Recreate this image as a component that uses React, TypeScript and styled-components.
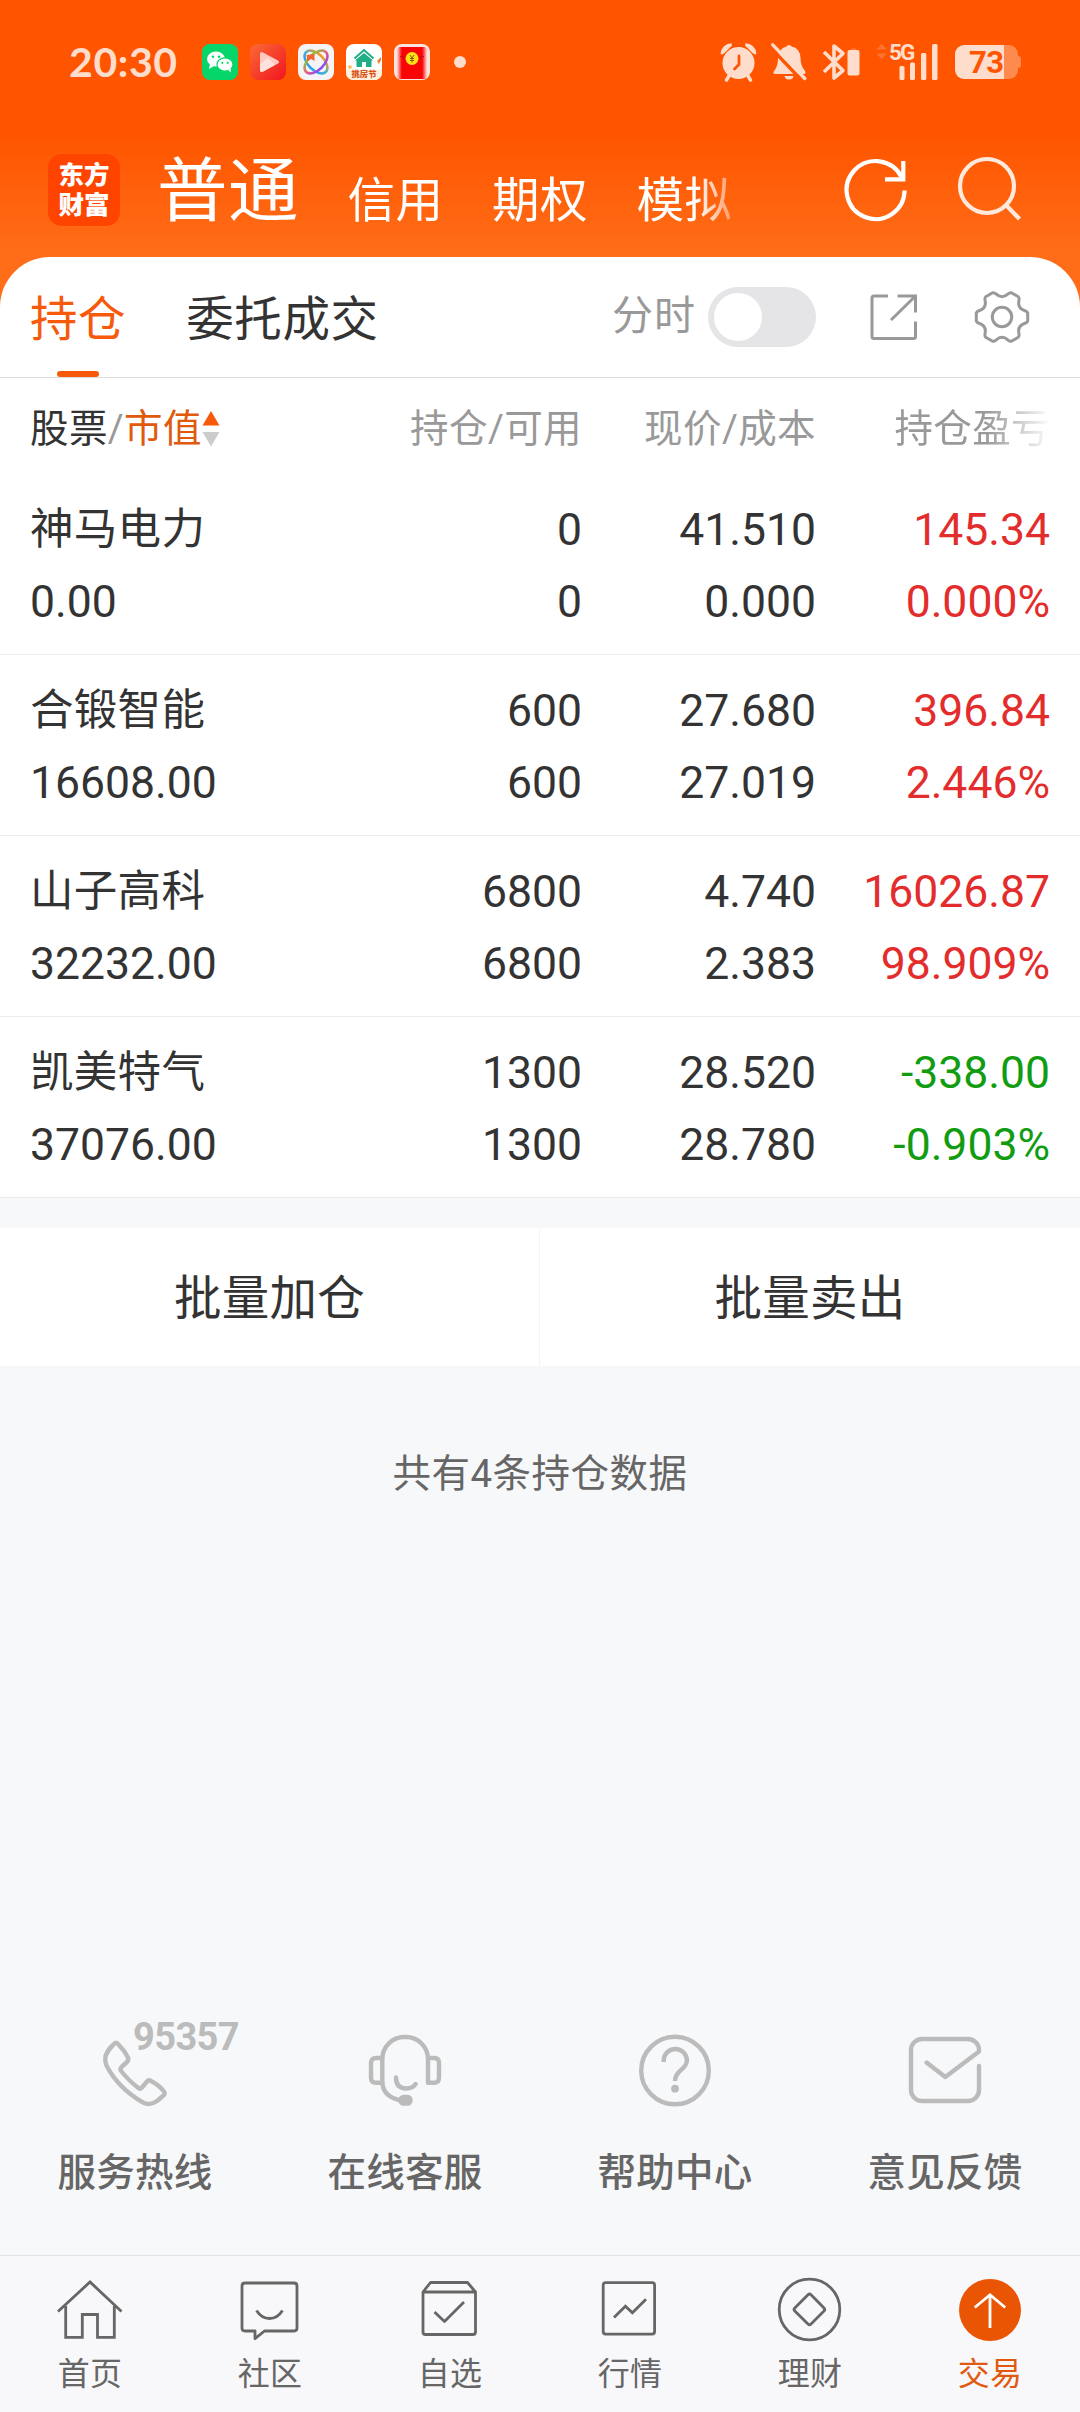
import React from "react";
import styled, { createGlobalStyle, css } from "styled-components";

const FONT = `Roboto, "Noto Sans CJK SC", sans-serif`;

const Global = createGlobalStyle`
  *, *::before, *::after { box-sizing: border-box; }
  body { margin: 0; background: #f7f8fa; font-family: ${FONT}; color: #333; }
  svg { display: block; flex: none; }
`;

const Page = styled.div`
  width: 1080px;
  height: 2412px;
  display: flex;
  flex-direction: column;
  background: #f7f8fa;
  overflow: hidden;
`;

/* ---------- orange header ---------- */

const Hero = styled.header`
  height: 307px;
  margin-bottom: -50px;
  flex: none;
  background: linear-gradient(#ff5500 0, #ff5500 135px, #ff6d18 255px, #ff6d18 100%);
`;

const StatusBar = styled.div`
  height: 124px;
  padding: 0 59px 0 69px;
  display: flex;
  align-items: center;
  justify-content: space-between;
  color: #ffddcc;
`;

const StatusLeft = styled.div`
  display: flex;
  align-items: center;
`;

const Clock = styled.span`
  width: 133px;
  font: 700 41px/50px Lato, sans-serif;
  letter-spacing: 0.6px;
`;

const AppIcons = styled.div`
  display: flex;
  gap: 12px;
`;

const MoreDot = styled.i`
  width: 12px;
  height: 12px;
  margin-left: 24px;
  border-radius: 50%;
  background: #ffddcc;
`;

const StatusRight = styled.div`
  display: flex;
  align-items: center;
`;

const StatusGlyphs = styled.div`
  display: flex;
  align-items: center;
  gap: 13px;
`;

const SignalWrap = styled.div`
  position: relative;
  margin: 0 17px 0 14px;
`;

const SignalLabel = styled.span`
  position: absolute;
  left: 13px;
  top: -3px;
  font: 700 22.5px/24px Roboto, sans-serif;
  letter-spacing: -1.8px;
`;

const Battery = styled.div`
  display: flex;
  align-items: center;
`;

const BatteryBody = styled.div`
  width: 63px;
  height: 34px;
  padding-left: 14px;
  border-radius: 9px;
  background: linear-gradient(90deg, #ffddcc 49px, #ff8a4d 49px);
  font: 700 31px/36px Roboto, sans-serif;
  letter-spacing: -0.5px;
  color: #ff5500;
`;

const BatteryNub = styled.i`
  width: 3px;
  height: 12px;
  border-radius: 0 3px 3px 0;
  background: #ff8a4d;
`;

const NavBar = styled.div`
  height: 133px;
  padding: 0 57px 0 48px;
  display: flex;
  align-items: center;
`;

const Logo = styled.div`
  width: 72px;
  height: 72px;
  margin-right: 37px;
  margin-top: -2px;
  border-radius: 14px;
  background: #ff4400;
  display: grid;
  place-content: center;
  font: 900 25.5px/30px ${FONT};
  color: #fff;
`;

const Accounts = styled.nav`
  width: 573px;
  margin-top: 11px;
  display: flex;
  align-items: baseline;
  gap: 48.5px;
  color: #fff;
  mask-image: linear-gradient(90deg, #000 540px, transparent 594px);
`;

const Account = styled.span<{ $active?: boolean }>`
  white-space: nowrap;
  font-size: ${(p) => (p.$active ? 70.5 : 47.5)}px;
  line-height: 100px;
  letter-spacing: 0.5px;
  ${(p) => !p.$active && css`position: relative; top: 1px;`}
`;

const NavActions = styled.div`
  margin-left: auto;
  margin-top: -2px;
  display: flex;
  gap: 39px;
`;

/* ---------- positions sheet ---------- */

const Sheet = styled.section`
  flex: none;
  background: #fff;
  border-radius: 50px 50px 0 0;
`;

const TabRow = styled.div`
  height: 121px;
  padding: 0 50px 0 30px;
  display: flex;
  align-items: center;
  border-bottom: 1px solid #dcdddf;
`;

const Tab = styled.div<{ $active?: boolean }>`
  height: 120px;
  margin-right: 60px;
  display: flex;
  flex-direction: column;
  align-items: center;
  font-size: 47.5px;
  line-height: 127px;
  letter-spacing: 0.6px;
  color: ${(p) => (p.$active ? "#f75a0b" : "#333")};
  ${(p) =>
    p.$active &&
    css`
      &::after {
        content: "";
        width: 42px;
        height: 6px;
        margin-top: -13px;
        border-radius: 3px;
        background: #f75a0b;
      }
    `}
`;

const TabTools = styled.div`
  margin-left: auto;
  margin-top: -1px;
  display: flex;
  align-items: center;
`;

const ToolIcons = styled.div`
  display: flex;
  align-items: center;
  gap: 57px;
`;

const ToggleLabel = styled.span`
  margin-right: 12px;
  font-size: 41px;
  line-height: 50px;
  margin-top: -1px;
  letter-spacing: 1px;
  color: #999;
`;

const Toggle = styled.div`
  width: 108px;
  height: 60px;
  margin-right: 53px;
  padding: 6px;
  border-radius: 30px;
  background: #e5e5e7;
  &::before {
    content: "";
    display: block;
    width: 48px;
    height: 48px;
    border-radius: 50%;
    background: #fff;
  }
`;

const columns = css`
  display: grid;
  grid-template-columns: 1fr 252px 234px 234px;
  padding: 0 30px;
  text-align: right;
`;

const TableHead = styled.div`
  ${columns}
  height: 96px;
  line-height: 102px;
  font-size: 38.5px;
  letter-spacing: 0.4px;
  color: #999;
`;

const HeadCell = styled.span`
  white-space: nowrap;
`;

const FadedCell = styled(HeadCell)`
  mask-image: linear-gradient(90deg, #000 170px, transparent 236px);
`;

const SortCell = styled(HeadCell)`
  display: flex;
  align-items: center;
  text-align: left;
  b { font-weight: 400; color: #333; }
  em { font-style: normal; color: #e0590c; }
`;

const Row = styled.div`
  ${columns}
  height: 181px;
  padding-top: 20px;
  line-height: 72px;
  font-size: 44.5px;
  border-bottom: 1px solid #ececee;
`;

const Cell = styled.div<{ $tone?: string }>`
  display: flex;
  flex-direction: column;
  color: ${(p) => p.$tone ?? "#333"};
`;

const NameCell = styled(Cell)`
  text-align: left;
`;

const StockName = styled.span`
  font-size: 43.5px;
  letter-spacing: 0.3px;
`;

/* ---------- batch actions ---------- */

const Batch = styled.div`
  flex: none;
  height: 138px;
  margin-top: 30px;
  display: grid;
  grid-template-columns: 539px 1fr;
  background: #fff;
`;

const BatchButton = styled.div`
  display: grid;
  place-items: center;
  padding-top: 4px;
  font-size: 47.5px;
  line-height: 60px;
  letter-spacing: 0.3px;
  & + & { border-left: 1px solid #f4f5f7; }
`;

const Summary = styled.p`
  flex: 1;
  margin: 0;
  padding-top: 81px;
  text-align: center;
  font-size: 38.5px;
  line-height: 54px;
  letter-spacing: 0.5px;
  color: #666;
`;

/* ---------- service shortcuts ---------- */

const Services = styled.div`
  flex: none;
  height: 220px;
  display: grid;
  grid-template-columns: repeat(4, 1fr);
`;

const Service = styled.div`
  display: flex;
  flex-direction: column;
  align-items: center;
  gap: 38px;
  font-size: 38.5px;
  font-weight: 500;
  line-height: 56px;
  letter-spacing: 0.3px;
  color: #666;
`;

const ServiceIcon = styled.div`
  position: relative;
`;

const Hotline = styled.span`
  position: absolute;
  left: 34px;
  top: -18px;
  font: 700 38px/40px Roboto, sans-serif;
  letter-spacing: -0.6px;
  color: #bbb;
`;

/* ---------- bottom navigation ---------- */

const TabBar = styled.nav`
  flex: none;
  height: 157px;
  padding-top: 18px;
  display: grid;
  grid-template-columns: repeat(6, 1fr);
  border-top: 1px solid #dfe2e6;
  background: #f8f8fa;
`;

const TabItem = styled.div<{ $active?: boolean }>`
  display: flex;
  flex-direction: column;
  align-items: center;
  font-size: 32px;
  line-height: 56px;
  letter-spacing: 0.3px;
  color: ${(p) => (p.$active ? "#e05a10" : "#666")};
`;

/* ---------- icons ---------- */

const WeChatIcon = () => (
  <svg width="36" height="36" viewBox="0 0 36 36">
    <rect width="36" height="36" rx="8" fill="#06d66a" />
    <ellipse cx="14" cy="15" rx="9" ry="7.5" fill="#fff" />
    <path d="M8 20l-1 5 5-3z" fill="#fff" />
    <ellipse cx="23" cy="20.5" rx="8" ry="6.7" fill="#fff" stroke="#06d66a" strokeWidth="1.2" />
    <path d="M26 26l3 2.500-.4-4z" fill="#fff" />
    <g fill="#06d66a">
      <circle cx="11" cy="12.7" r="1.3" /><circle cx="17" cy="12.7" r="1.3" />
      <circle cx="20.3" cy="18.8" r="1.1" /><circle cx="25.7" cy="18.8" r="1.1" />
    </g>
  </svg>
);

const VideoIcon = () => (
  <svg width="36" height="36" viewBox="0 0 36 36">
    <defs>
      <linearGradient id="video" x1="0" y1="0" x2="1" y2="1">
        <stop offset="0" stopColor="#fb6a35" /><stop offset="1" stopColor="#f01520" />
      </linearGradient>
    </defs>
    <rect width="36" height="36" rx="8" fill="url(#video)" />
    <path d="M10 10q0-3 3-1.600l15 8q2 1.600 0 3.200l-15 8q-3 1.400-3-1.600z" fill="#ffc9c0" />
    <path d="M10 20l8-6 7 7-12 6.700q-3 1.300-3-1.700z" fill="#ffe9e4" opacity=".75" />
  </svg>
);

const OrbitIcon = () => (
  <svg width="36" height="36" viewBox="0 0 36 36">
    <defs>
      <linearGradient id="orbit" x1="0" y1="0" x2="0" y2="1">
        <stop offset="0" stopColor="#f39a1e" /><stop offset=".5" stopColor="#4fb0c8" /><stop offset="1" stopColor="#2a9df0" />
      </linearGradient>
      <linearGradient id="orbit2" x1="0" y1="0" x2="0" y2="1">
        <stop offset="0" stopColor="#8cc63c" /><stop offset=".55" stopColor="#ee5a7a" /><stop offset="1" stopColor="#8d4bf0" />
      </linearGradient>
    </defs>
    <rect width="36" height="36" rx="8" fill="#f4f4f6" />
    <g fill="none" strokeWidth="2.6">
      <ellipse cx="18" cy="18" rx="14" ry="8" transform="rotate(45 18 18)" stroke="url(#orbit)" />
      <ellipse cx="18" cy="18" rx="14" ry="8" transform="rotate(-45 18 18)" stroke="url(#orbit2)" />
    </g>
    <path d="M8.500 11l8-1v7l-3.500-2-3.500 2.500z" fill="#f0652f" />
  </svg>
);

const HouseIcon = () => (
  <svg width="36" height="36" viewBox="0 0 36 36">
    <rect width="36" height="36" rx="8" fill="#fff" />
    <path d="M0 25q18 4 36 0v3q0 8-8 8H8q-8 0-8-8z" fill="#fff0dc" />
    <path d="M8.500 14.500L18 6l9.500 8.500" fill="none" stroke="#1fae85" strokeWidth="2" />
    <path d="M9 16.500L18 9l9 7.500h-1.500V23H20v-5h-4v5h-5.500v-6.500z" fill="#1fae85" />
    <circle cx="4" cy="23" r="2" fill="#f8c66a" /><path d="M31 17l4-4v3l-2 4z" fill="#e8842c" />
    <text x="18" y="32.8" textAnchor="middle" fontSize="8.300" fontWeight="900" fill="#d8561c" fontFamily="Noto Sans CJK SC, sans-serif">挑房节</text>
  </svg>
);

const PacketIcon = () => (
  <svg width="36" height="36" viewBox="0 0 36 36">
    <defs>
      <linearGradient id="packet" x1="0" y1="0" x2="1" y2="0">
        <stop offset="0" stopColor="#ffd9d4" /><stop offset=".16" stopColor="#f80606" />
        <stop offset=".84" stopColor="#f80606" /><stop offset="1" stopColor="#ffd9d4" />
      </linearGradient>
    </defs>
    <rect width="36" height="36" rx="8" fill="#fbe4e0" />
    <rect x="3" y="3" width="30" height="32" rx="3" fill="url(#packet)" />
    <path d="M6 12.500q12 3 24 0" fill="none" stroke="#c00808" strokeWidth=".8" />
    <circle cx="18" cy="14.5" r="6.5" fill="#ffe11a" />
    <path d="M16 11l2 3 2-3M18 14v4.500M16 14.500h4M16 16.500h4" fill="none" stroke="#8a5a00" strokeWidth="1" />
  </svg>
);

const AlarmIcon = () => (
  <svg width="38" height="40" viewBox="0 0 38 40" fill="#ffddcc">
    <path d="M.6 11.500A11 11 0 0 1 11.500 1.200Q12.500 4 10.500 5L4.500 11Q1.500 13.500.6 11.500zM36.400 11.500A11 11 0 0 0 25.500 1.200Q24.500 4 26.500 5l6 6q3 2.500 3.900.5z" />
    <circle cx="18.5" cy="21" r="16" />
    <path d="M9 34l-2.500 4M28 34l2.500 4" stroke="#ffddcc" strokeWidth="3.4" strokeLinecap="round" />
    <path d="M19 14v8.500L14.500 27" fill="none" stroke="#ff5500" strokeWidth="2.8" strokeLinecap="round" />
  </svg>
);

const MutedBellIcon = () => (
  <svg width="38" height="40" viewBox="0 0 38 40" fill="#ffddcc">
    <path d="M18 3q2 0 2.500 1.500Q29 6 29.500 16q0 8 4.500 13 1.500 3-1 3H4q-3-.5-.5-3.500Q7 24 7 16 7.500 6.500 15.500 4.500 16 3 18 3zM13.500 34h9q-.5 3.500-4.500 3.500T13.500 34z" />
    <path d="M0 6L31 38.500" stroke="#ff5500" strokeWidth="3.5" />
    <path d="M2 0L8 0 8 9.500 2 4z" fill="#ff5500" />
    <path d="M1.800 2.800L33.800 36.500" stroke="#ffddcc" strokeWidth="3.3" strokeLinecap="round" />
  </svg>
);

const BluetoothIcon = () => (
  <svg width="40" height="40" viewBox="0 0 40 40">
    <path d="M2 10l19 18.500L12 36V4l9 7.500L2 30" fill="none" stroke="#ffddcc" strokeWidth="3.6" strokeLinejoin="round" />
    <path d="M29 6h5v3h-5z" fill="#ff6e2b" />
    <rect x="25.5" y="8" width="12" height="25.5" rx="2" fill="#ffddcc" />
  </svg>
);

const SignalIcon = () => (
  <svg width="62" height="38" viewBox="0 0 62 38" fill="#ffddcc">
    <path d="M5.500 1l5 5.500H.5zM5.500 16l5-5.500H.5z" fill="#ff7433" />
    <rect x="23.5" y="23" width="5" height="14" rx="1.5" />
    <rect x="34" y="19.5" width="5" height="17.5" rx="1.5" />
    <rect x="45" y="10" width="5.3" height="27" rx="1.5" />
    <rect x="56" y="1" width="5.5" height="36" rx="1.5" />
  </svg>
);

const RefreshIcon = () => (
  <svg width="72" height="72" viewBox="0 0 72 72" fill="none" stroke="#fff" strokeWidth="4.2">
    <path d="M64.600 36.500A29 29 0 1 1 61.500 23" />
    <path d="M63.300 7v18.300H45" />
  </svg>
);

const SearchIcon = () => (
  <svg width="72" height="72" viewBox="0 0 72 72" fill="none" stroke="#ffe8dc" strokeWidth="4.2">
    <circle cx="36" cy="32" r="27" />
    <path d="M54.500 50.500L68.500 65" />
  </svg>
);

const ShareIcon = () => (
  <svg width="48" height="48" viewBox="0 0 48 48" fill="none" stroke="#999" strokeWidth="3">
    <path d="M19 3H5q-2 0-2 2v38.500q0 2 2 2h39.500q2 0 2-2V28.500" />
    <path d="M28.500 3H46.500V19.500M46 3.500L22 27" />
  </svg>
);

const gearOutline = (() => {
  const rot = (x: number, y: number, deg: number) => {
    const a = (deg * Math.PI) / 180;
    return `${(28 + x * Math.cos(a) - y * Math.sin(a)).toFixed(2)} ${(28 + x * Math.sin(a) + y * Math.cos(a)).toFixed(2)}`;
  };
  let d = "";
  for (let k = 0; k < 6; k++) {
    const t = k * 60;
    d += `${k ? "L" : "M"}${rot(25.7, -4, t)}L${rot(25.7, 4, t)}Q${rot(25.2, 5.6, t)} ${rot(23, 6.3, t)}`;
    d += `Q${rot(17.5, 0, t + 30)} ${rot(23, -6.3, t + 60)}Q${rot(25.2, -5.6, t + 60)} ${rot(25.7, -4, t + 60)}`;
  }
  return d + "Z";
})();

const GearIcon = () => (
  <svg width="56" height="56" viewBox="0 0 56 56" fill="none" stroke="#999" strokeWidth="3" strokeLinejoin="round">
    <path d={gearOutline} />
    <circle cx="28" cy="28" r="9.7" />
  </svg>
);

const SortIcon = () => (
  <svg width="18" height="38" viewBox="0 0 18 38">
    <path d="M9 1l8.500 14.500H.5z" fill="#f75a0b" />
    <path d="M9 36.500L.5 22h17z" fill="#ccc" />
  </svg>
);

const ServiceSvg = styled.svg.attrs({ viewBox: "0 0 72 72" })`
  width: 72px;
  height: 72px;
  fill: none;
  stroke: #bbb;
  stroke-width: 4.4px;
  stroke-linecap: round;
  stroke-linejoin: round;
  overflow: visible;
`;

const PhoneIcon = () => (
  <ServiceSvg>
    <path d="M14.500 9.500Q17 6 19.500 9.500q6 6 9.500 13 1 2.500-1 4.500l-5.500 5q-2 2 0 4.500 8 10 17 16.500 2 1.500 3.500-.5l5-6q1.500-2 4-.5 8 4 13 10.500 1.500 2-.5 4l-6.500 5.500Q51 71 44 67.500 19 53 7.500 30.500 5.500 26 6.500 21 9 14.500 14.500 9.500z" />
  </ServiceSvg>
);

const HeadsetIcon = () => (
  <ServiceSvg>
    <path d="M13.300 23H7q-5 0-5 5v14.700q0 5 5 5h6.300" />
    <path d="M30 65Q13.300 61 13.300 46V24a22 22 0 0 1 22-22H37a22 22 0 0 1 22 22v23.700h6q5 0 5-5V28q0-5-5-5h-6" />
    <path d="M27 42.500q0 11 10.500 11 6 0 9.200-4.500" />
    <rect x="31.5" y="62" width="10" height="6.5" rx="3" fill="#bbb" />
  </ServiceSvg>
);

const HelpIcon = () => (
  <ServiceSvg>
    <circle cx="36" cy="35.5" r="33.8" />
    <path d="M24.700 27v-1.500a11.600 11.500 0 0 1 23.200 0C47.900 34.500 36 35 36 46" strokeLinecap="butt" />
    <circle cx="36" cy="53.7" r="3.9" fill="#bbb" stroke="none" />
  </ServiceSvg>
);

const FeedbackIcon = () => (
  <ServiceSvg>
    <path d="M70 31v24a11 11 0 0 1-11 11H13A11 11 0 0 1 2 55V15A11 11 0 0 1 13 4h46a11 11 0 0 1 11 11v1.500L36.300 42 17.500 27.500" />
  </ServiceSvg>
);

const NavSvg = styled.svg.attrs({ viewBox: "0 0 72 72" })`
  width: 72px;
  height: 72px;
  fill: none;
  stroke: #666;
  stroke-width: 2.8px;
`;

const HomeIcon = () => (
  <NavSvg>
    <path d="M4 37.500L36 8l31.500 29.500M11.700 32v31.300H28.300V40.500h15.200v22.800h16.800V32" />
  </NavSvg>
);

const CommunityIcon = () => (
  <NavSvg strokeLinejoin="round">
    <path d="M11 9h49q3 0 3 3v42q0 3-3 3H30.500L21 64.700V57H11q-3 0-3-3V12q0-3 3-3z" />
    <path d="M22.500 36.500q5 8 13 8t13-8" />
  </NavSvg>
);

const WatchlistIcon = () => (
  <NavSvg strokeLinejoin="round">
    <path d="M9 18l7.500-9.500h37L61.500 18v40q0 2.500-2.500 2.500H11.500Q9 60.500 9 58zM9 18h52.500" />
    <path d="M20.500 38l10 9.500L50 28" />
  </NavSvg>
);

const MarketIcon = () => (
  <NavSvg>
    <rect x="9.2" y="8.7" width="51.4" height="51.4" rx="2.5" />
    <path d="M20 43.500l11.400-11.300 7 6.500L52 25.300" />
  </NavSvg>
);

const WealthIcon = () => (
  <NavSvg strokeLinejoin="round">
    <circle cx="35.5" cy="35.5" r="30.3" />
    <path d="M34 20.800q1.500-1.500 3 0l13 13.200q1.500 1.500 0 3L37 50q-1.500 1.500-3 0L20.800 37q-1.500-1.500 0-3z" />
  </NavSvg>
);

const TradeIcon = () => (
  <NavSvg>
    <circle cx="36" cy="36" r="31" fill="#ea5504" stroke="none" />
    <path d="M36 54V21M20.800 33.500L36 20.800l15.200 12.700" stroke="#fff" />
  </NavSvg>
);

/* ---------- data ---------- */

const RED = "#e32d2d";
const GREEN = "#119c11";

const positions = [
  { name: "神马电力", value: "0.00", held: "0", free: "0", price: "41.510", cost: "0.000", pnl: "145.34", pct: "0.000%" },
  { name: "合锻智能", value: "16608.00", held: "600", free: "600", price: "27.680", cost: "27.019", pnl: "396.84", pct: "2.446%" },
  { name: "山子高科", value: "32232.00", held: "6800", free: "6800", price: "4.740", cost: "2.383", pnl: "16026.87", pct: "98.909%" },
  { name: "凯美特气", value: "37076.00", held: "1300", free: "1300", price: "28.520", cost: "28.780", pnl: "-338.00", pct: "-0.903%" },
];

const services = [
  { label: "服务热线", Icon: PhoneIcon, badge: "95357" },
  { label: "在线客服", Icon: HeadsetIcon },
  { label: "帮助中心", Icon: HelpIcon },
  { label: "意见反馈", Icon: FeedbackIcon },
];

const tabs = [
  { label: "首页", Icon: HomeIcon },
  { label: "社区", Icon: CommunityIcon },
  { label: "自选", Icon: WatchlistIcon },
  { label: "行情", Icon: MarketIcon },
  { label: "理财", Icon: WealthIcon },
  { label: "交易", Icon: TradeIcon, active: true },
];

export default function App() {
  return (
    <>
      <Global />
      <Page>
        <Hero>
          <StatusBar>
            <StatusLeft>
              <Clock>20:30</Clock>
              <AppIcons>
                <WeChatIcon />
                <VideoIcon />
                <OrbitIcon />
                <HouseIcon />
                <PacketIcon />
              </AppIcons>
              <MoreDot />
            </StatusLeft>
            <StatusRight>
              <StatusGlyphs>
                <AlarmIcon />
                <MutedBellIcon />
                <BluetoothIcon />
              </StatusGlyphs>
              <SignalWrap>
                <SignalIcon />
                <SignalLabel>5G</SignalLabel>
              </SignalWrap>
              <Battery>
                <BatteryBody>73</BatteryBody>
                <BatteryNub />
              </Battery>
            </StatusRight>
          </StatusBar>
          <NavBar>
            <Logo>
              <span>东方</span>
              <span>财富</span>
            </Logo>
            <Accounts>
              <Account $active>普通</Account>
              <Account>信用</Account>
              <Account>期权</Account>
              <Account>模拟</Account>
            </Accounts>
            <NavActions>
              <RefreshIcon />
              <SearchIcon />
            </NavActions>
          </NavBar>
        </Hero>

        <Sheet>
          <TabRow>
            <Tab $active>持仓</Tab>
            <Tab>委托成交</Tab>
            <TabTools>
              <ToggleLabel>分时</ToggleLabel>
              <Toggle />
              <ToolIcons>
                <ShareIcon />
                <GearIcon />
              </ToolIcons>
            </TabTools>
          </TabRow>
          <TableHead>
            <SortCell>
              <b>股票</b>/<em>市值</em>
              <SortIcon />
            </SortCell>
            <HeadCell>持仓/可用</HeadCell>
            <HeadCell>现价/成本</HeadCell>
            <FadedCell>持仓盈亏</FadedCell>
          </TableHead>
          {positions.map((p) => (
            <Row key={p.name}>
              <NameCell>
                <StockName>{p.name}</StockName>
                <span>{p.value}</span>
              </NameCell>
              <Cell>
                <span>{p.held}</span>
                <span>{p.free}</span>
              </Cell>
              <Cell>
                <span>{p.price}</span>
                <span>{p.cost}</span>
              </Cell>
              <Cell $tone={p.pnl.startsWith("-") ? GREEN : RED}>
                <span>{p.pnl}</span>
                <span>{p.pct}</span>
              </Cell>
            </Row>
          ))}
        </Sheet>

        <Batch>
          <BatchButton>批量加仓</BatchButton>
          <BatchButton>批量卖出</BatchButton>
        </Batch>
        <Summary>共有4条持仓数据</Summary>

        <Services>
          {services.map(({ label, Icon, badge }) => (
            <Service key={label}>
              <ServiceIcon>
                <Icon />
                {badge && <Hotline>{badge}</Hotline>}
              </ServiceIcon>
              {label}
            </Service>
          ))}
        </Services>

        <TabBar>
          {tabs.map(({ label, Icon, active }) => (
            <TabItem key={label} $active={active}>
              <Icon />
              {label}
            </TabItem>
          ))}
        </TabBar>
      </Page>
    </>
  );
}
